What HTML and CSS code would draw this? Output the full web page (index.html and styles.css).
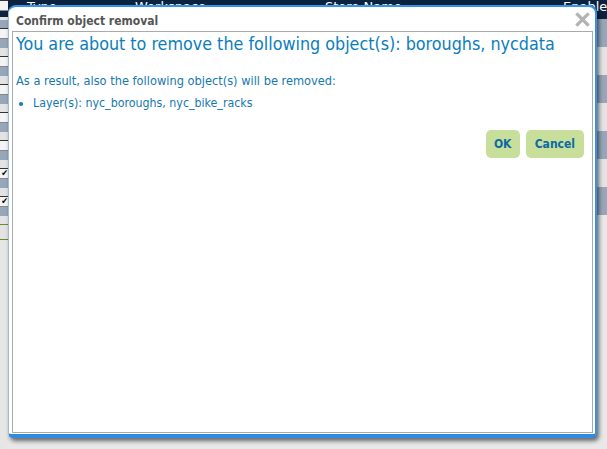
FILE: index.html
```html
<!DOCTYPE html>
<html>
<head>
<meta charset="utf-8">
<link rel="stylesheet" href="styles.css">
</head>
<body>
<div class="page">
  <div class="side">
    <div class="side-row"><span class="cb"></span></div>
    <div class="side-row"><span class="cb"></span></div>
    <div class="side-row"><span class="cb"></span></div>
    <div class="side-row"><span class="cb"></span></div>
    <div class="side-row"><span class="cb"></span></div>
    <div class="side-row"><span class="cb"></span></div>
    <div class="side-row"><span class="cb checked">✔</span></div>
    <div class="side-row"><span class="cb checked">✔</span></div>
    <div class="side-foot"></div>
  </div>
  <div class="grid">
    <div class="ghead">
      <span class="h1">Type</span>
      <span class="h2">Workspace</span>
      <span class="h3">Store Name</span>
      <span class="h4">Enabled</span>
    </div>
    <div class="grow a"></div>
    <div class="grow b"></div>
    <div class="grow a"></div>
    <div class="grow b"></div>
    <div class="grow a"></div>
    <div class="grow b"></div>
    <div class="grow a"></div>
  </div>
</div>

<div class="dialog">
  <div class="titlebar">
    <span class="title">Confirm object removal</span>
    <svg class="close" width="15" height="15" viewBox="0 0 15 15"><path d="M2.5 2.5 L12.5 12.5 M12.5 2.5 L2.5 12.5" stroke="#b3b3b3" stroke-width="3.2" stroke-linecap="square"/></svg>
  </div>
  <div class="panel">
    <h1 class="heading">You are about to remove the following object(s): boroughs, nycdata</h1>
    <p class="note">As a result, also the following object(s) will be removed:</p>
    <ul class="list">
      <li>Layer(s): nyc_boroughs, nyc_bike_racks</li>
    </ul>
    <div class="buttons">
      <button class="btn ok">OK</button>
      <button class="btn">Cancel</button>
    </div>
  </div>
</div>
</body>
</html>
```
FILE: styles.css
```css
html, body {
  margin: 0;
  padding: 0;
}
body {
  width: 607px;
  height: 449px;
  overflow: hidden;
  position: relative;
  background: #e8e8e8;
  font-family: "DejaVu Sans Condensed", "DejaVu Sans", sans-serif;
}
.page {
  display: flex;
  height: 449px;
}
.side {
  width: 8px;
  display: flex;
  flex-direction: column;
  overflow: hidden;
  background: #e6e6e6;
}
.side-row {
  height: 28px;
  flex: none;
  background: linear-gradient(#e3e3e3 0 10px, #0c2340 10px 17px, #e3e3e3 17px 20px, #97a6b9 20px 28px);
}
.side-row + .side-row {
  background: linear-gradient(#e3e3e3 0 10px, #97a6b9 10px 20px, #e3e3e3 20px 28px);
}
.cb {
  display: block;
  width: 9px;
  height: 9px;
  margin-left: -2px;
  border: 1px solid #333;
  border-right-color: #888;
  border-bottom-color: #888;
  background: #f4f4f4;
  font-size: 9px;
  line-height: 9px;
  color: #000;
  text-align: right;
  overflow: hidden;
}
.side-foot {
  height: 14px;
  border-top: 1px solid #6a8a30;
  border-bottom: 1px solid #6a8a30;
  background: #e3e3e3;
}
.grid {
  flex: 1;
  display: flex;
  flex-direction: column;
}
.ghead {
  height: 19px;
  background: #0c2340;
  color: #fff;
  font-family: "DejaVu Sans", sans-serif;
  font-size: 13px;
  line-height: 19px;
  position: relative;
  white-space: nowrap;
  overflow: hidden;
}
.ghead span {
  position: absolute;
  top: -3px;
}
.h1 { left: 19px; }
.h2 { left: 127px; }
.h3 { left: 317px; }
.h4 { left: 555px; }
.grow {
  height: 28px;
  flex: none;
}
.grow.a { background: #97a6b9; }
.grow.b { background: #e4e4e4; }

.dialog {
  position: absolute;
  left: 8px;
  top: 5px;
  width: 589px;
  height: 433px;
  box-sizing: border-box;
  background: #fff;
  border-top: 2px solid #3592e6;
  border-right: 2px solid #3592e6;
  border-bottom: 4px solid #2f8be2;
  border-left: 1px solid #9cbbe0;
  border-radius: 8px 8px 5px 5px;
  box-shadow: 2px 3px 4px rgba(0, 0, 0, 0.55);
  display: flex;
  flex-direction: column;
}
.titlebar {
  height: 24px;
  flex: none;
  display: flex;
  align-items: center;
  justify-content: space-between;
  padding: 0 5px 0 7px;
}
.title {
  font-size: 12px;
  font-weight: bold;
  color: #555;
  margin-top: 3px;
}
.close {
  display: block;
}
.panel {
  flex: 1;
  margin: 0 2px 1px 3px;
  border: 1px solid #aaa;
  padding: 1px 3px;
}
.heading {
  margin: 0;
  font-size: 17.75px;
  font-weight: normal;
  line-height: 22px;
  color: #0a7dbd;
  white-space: nowrap;
}
.note {
  margin: 18px 0 0;
  font-size: 12.7px;
  line-height: 15px;
  color: #1578b0;
}
.list {
  margin: 8px 0 0;
  padding-left: 17px;
  font-size: 12.3px;
  line-height: 15px;
  color: #1578b0;
}
.buttons {
  display: flex;
  justify-content: flex-end;
  gap: 6px;
  margin-top: 19px;
  padding-right: 5px;
}
.btn {
  height: 28px;
  padding: 0 9px;
  border: none;
  border-radius: 5px;
  background: #c8df9c;
  color: #0b6aa2;
  font-family: "DejaVu Sans Condensed", "DejaVu Sans", sans-serif;
  font-weight: bold;
  font-size: 12px;
}
.btn.ok {
  width: 34px;
  padding: 0;
}
```
